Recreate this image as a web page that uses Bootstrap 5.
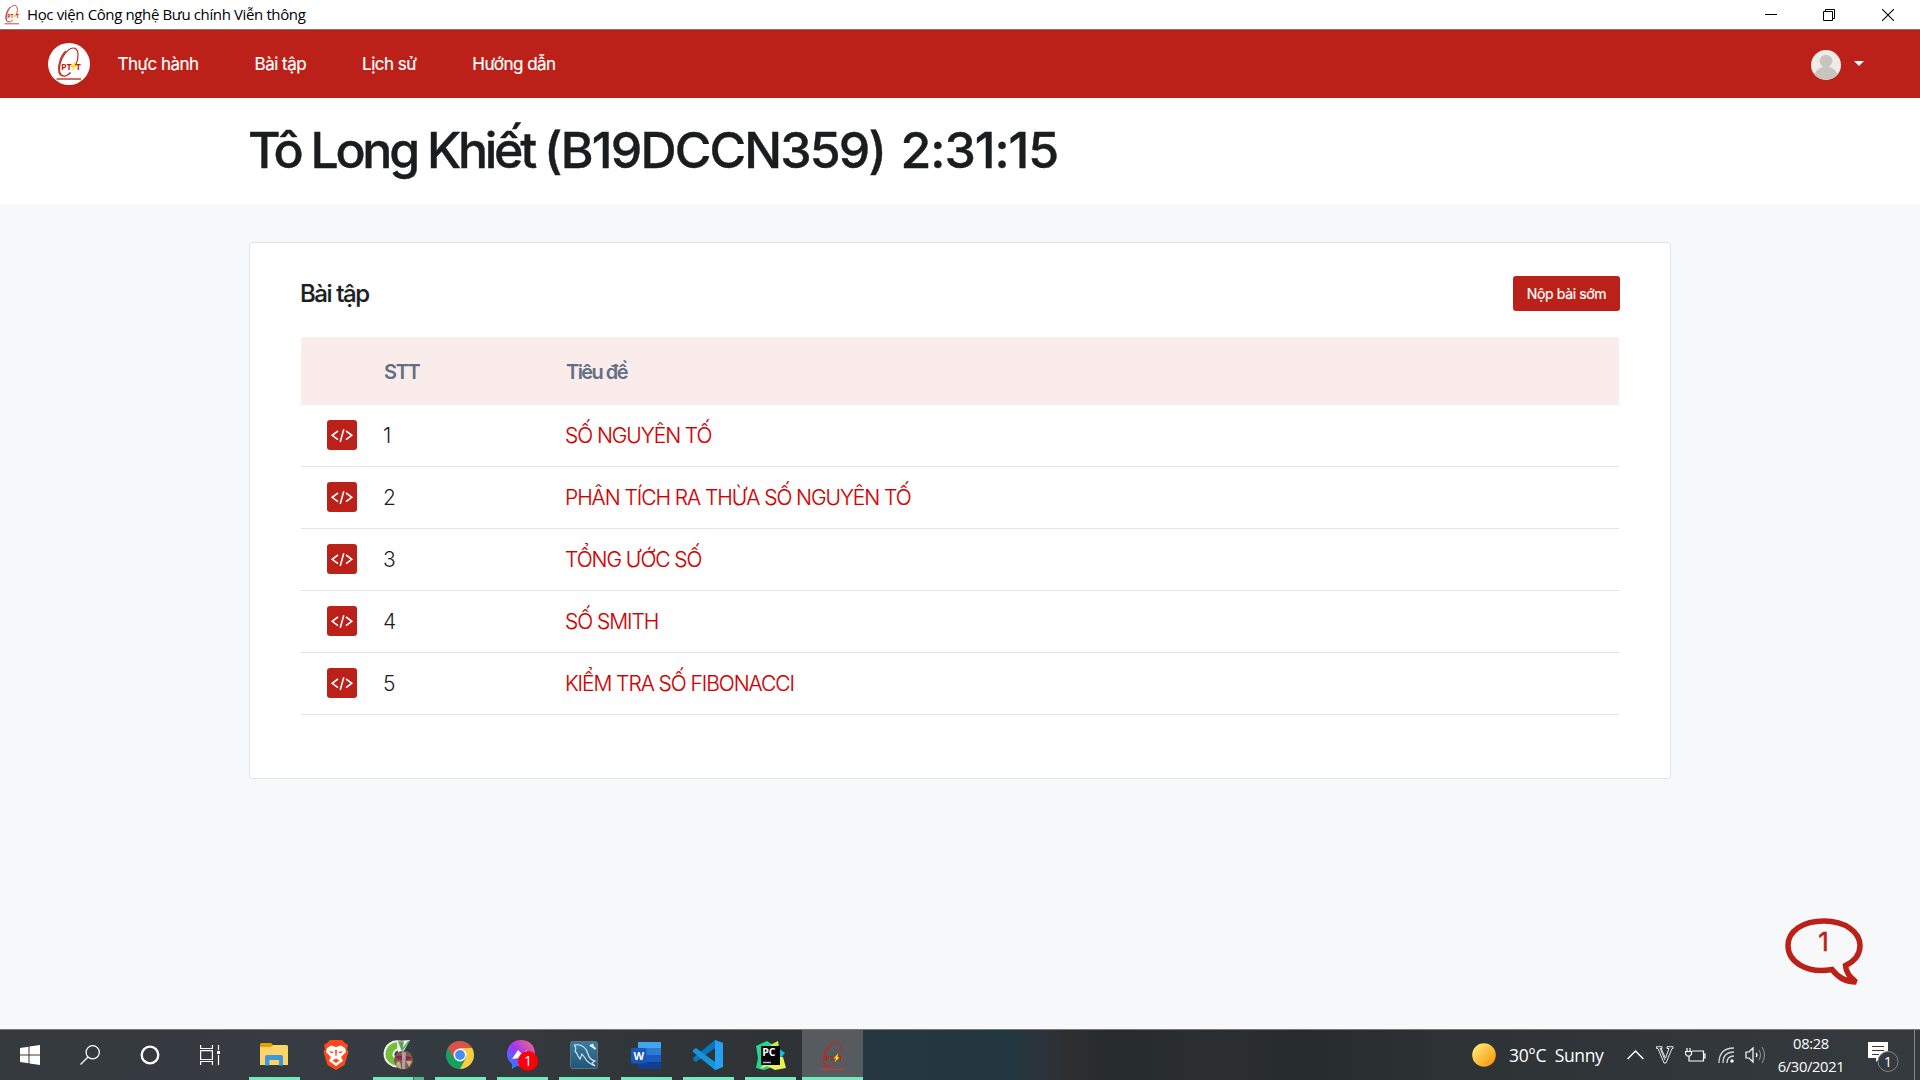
<!DOCTYPE html>
<html lang="vi">
<head>
<meta charset="utf-8">
<meta name="viewport" content="width=device-width, initial-scale=1">
<title>Học viện Công nghệ Bưu chính Viễn thông</title>
<link href="https://cdn.jsdelivr.net/npm/bootstrap@5.3.0/dist/css/bootstrap.min.css" rel="stylesheet">
<style>
:root{--ptit-red:#bb2119}
body{font-family:Inter,"Liberation Sans",sans-serif;background:#f6f8fa;color:#1b1f23;width:1920px;height:1080px;overflow:hidden}
svg{display:block;flex:none}
.titlebar{height:30px;background:#fff;border-bottom:1px solid #7d7671;color:#000;font:15px "Open Sans","Noto Sans",sans-serif;padding:0 3px 0 3px}
.titlebar .caption{letter-spacing:-.37px;margin:0 0 2px 6px}
.winctl{width:58.5px}
.topnav{height:68px;background:var(--ptit-red);padding:0 56px 0 48px}
.topnav .nav-link{color:#fff;font-size:17px;letter-spacing:-.52px;-webkit-text-stroke:.2px #fff;padding:0;margin-left:56px;line-height:24px}
.topnav .nav-link.first{margin-left:27.5px}
.caret{border:5px solid transparent;border-top-color:#fff;border-bottom:0;margin:0 0 1px 13px}
.banner{height:106px;background:#fff;padding:0 0 2px 248px}
.banner h1{font-size:50px;font-weight:500;line-height:60px;color:#1b1c1e;-webkit-text-stroke:.4px #1b1c1e}
.who{letter-spacing:-3.28px}
.code-id{letter-spacing:-1.85px}
.clock{letter-spacing:-1.05px;margin-left:15.5px}
.panel{width:1422px;height:537px;margin:38px 0 0 249px;border:1px solid #e1e4e8;border-radius:4px;background:#fff;padding:33px 50px 0}
.panel h2{font-size:24px;font-weight:500;letter-spacing:-1.4px;line-height:36px;-webkit-text-stroke:.2px #1b1f23}
.early{background:var(--ptit-red);color:#fff;border:0;border-radius:3px;width:107px;height:35px;padding:0;font-size:14px;font-weight:400;letter-spacing:-.35px;margin-bottom:1px;-webkit-text-stroke:.2px #fff}
.early:hover{background:#a31c15;color:#fff}
.tasks{width:1318px;margin:25px 0 0 1px;table-layout:fixed;border-collapse:separate;border-spacing:0}
.tasks th{height:68px;background:#f9eceb;color:#637083;font-size:20px;font-weight:600;letter-spacing:-1.3px;padding:1px 1px 0;vertical-align:middle}
.tasks th:nth-child(3){letter-spacing:-1.55px}
.tasks th:first-child{border-top-left-radius:4px}
.tasks th:last-child{border-top-right-radius:4px}
.tasks td{height:62px;border-bottom:1px solid #e1e4e8;font-size:21px;font-weight:300;padding:1px 0 0;vertical-align:middle}
.tasks td:first-child{padding:0 0 1px}
.tasks a{color:#cf0000;text-decoration:none;letter-spacing:-1.06px;-webkit-text-stroke:.15px #cf0000}
.codebtn{width:30px;height:30px;border-radius:3px;background:var(--ptit-red);margin-left:26px}
.bubble{position:absolute;left:1785px;top:917px;width:80px;height:68px}
.taskbar{position:absolute;left:0;right:0;bottom:0;height:51px;border-top:1px solid #77797b;background:linear-gradient(90deg,#343a3e 0,#373b42 310px,#343b40 430px,#2e3235 800px,#263741 863px,#22363f 1010px,#2c3239 1042px,#2d2e2f 1075px,#262b2b 1115px,#2b2f31 1220px,#262b2b 1300px,#2d3335 1450px,#343a3e 1920px);color:#fff;font-family:"Open Sans","Noto Sans",sans-serif}
.sysbtn{width:60px;height:50px}
.app{width:62px;height:50px;position:relative}
.run::after{content:"";position:absolute;left:6px;right:5px;bottom:0;height:3px;background:#74e9bb}
.stacked::after{background:linear-gradient(90deg,#74e9bb 40px,#416c60 40px,#416c60 41px,#54b592 41px)}
.now{width:61px;margin-left:1px;background:#555b5f}
.now::after{left:0;right:0}
.weather{font-size:17.5px;letter-spacing:-.33px;white-space:pre;width:118px;margin-left:13px}
.datetime{width:68px;font-size:14.7px;line-height:23px;letter-spacing:-.32px;white-space:nowrap}
.peek{width:1px;height:50px;background:#868a8c}
</style>
</head>
<body>
<svg width="0" height="0" class="position-absolute">
<defs>
<symbol id="ptit" viewBox="6 3 30 35">
<ellipse cx="20.700" cy="19" rx="7.600" ry="15" transform="rotate(25 20.700 19)" fill="none" stroke="#bf2a24" stroke-width="1.200" pathLength="100" stroke-dasharray="90 10" stroke-dashoffset="-12"/>
<path d="M18 8C14 11 9.500 20 11 29C11.500 31.500 13 33 15 32.500" fill="none" stroke="#bf2a24" stroke-width="1.300"/>
<text x="13" y="26.500" font-family="Open Sans,sans-serif" font-weight="700" font-size="8.800" fill="#bd241c">PT</text>
<text x="27.800" y="26.500" font-family="Open Sans,sans-serif" font-weight="700" font-size="8.800" fill="#bd241c">T</text>
<path d="M27.500 18L22.500 24H25L23.500 28L29 22.500H26.500Z" fill="#f8ea00"/>
<path d="M8.500 36H33" stroke="#c43b35" stroke-width="1.500"/>
</symbol>
<symbol id="code" viewBox="0 0 30 30">
<path d="M11 11L5.200 15.300L11 19.700M19 11L24.800 15.300L19 19.700M16.800 9.200L13.200 22" fill="none" stroke="#fff" stroke-width="1.600"/>
</symbol>
</defs>
</svg>

<header class="titlebar d-flex align-items-center">
<svg width="18" height="21"><use href="#ptit"/></svg>
<span class="caption">Học viện Công nghệ Bưu chính Viễn thông</span>
<div class="d-flex ms-auto">
<div class="winctl d-flex justify-content-center"><svg width="12" height="12"><path d="M0 5.500H12" stroke="#000"/></svg></div>
<div class="winctl d-flex justify-content-center"><svg width="12" height="12" fill="none" stroke="#000"><path d="M.5 2.500H9.500V11.500H.5ZM2.500 2.500V.5H11.500V9.500H9.500"/></svg></div>
<div class="winctl d-flex justify-content-center"><svg width="12" height="12"><path d="M0 0L12 12M12 0L0 12" stroke="#000" stroke-width="1.100"/></svg></div>
</div>
</header>

<nav class="topnav d-flex align-items-center">
<svg width="42" height="42" viewBox="0 0 42 42"><circle cx="21" cy="21" r="21" fill="#fff"/><use href="#ptit" x="6" y="3" width="30" height="35"/></svg>
<a class="nav-link first" href="#">Thực hành</a>
<a class="nav-link" href="#">Bài tập</a>
<a class="nav-link" href="#">Lịch sử</a>
<a class="nav-link" href="#">Hướng dẫn</a>
<div class="d-flex align-items-center ms-auto">
<svg width="30" height="31" viewBox="0 -1 30 31"><clipPath id="av"><circle cx="15" cy="15" r="15"/></clipPath><g clip-path="url(#av)"><path fill="#efebe7" d="M0 0H30V30H0Z"/><circle cx="15" cy="11" r="6.300" fill="#c8c4be"/><path d="M3 27C5 13 25 13 27 27V31H3Z" fill="#c8c4be"/></g></svg>
<span class="caret"></span>
</div>
</nav>

<section class="banner d-flex align-items-center"><h1 class="m-0 text-nowrap"><span class="who">Tô Long Khiết </span><span class="code-id">(B19DCCN359)</span><span class="clock">2:31:15</span></h1></section>

<main class="panel">
<div class="d-flex justify-content-between align-items-center"><h2 class="m-0">Bài tập</h2><button class="btn early">Nộp bài sớm</button></div>
<table class="tasks">
<colgroup><col style="width:82px"><col style="width:182px"><col></colgroup>
<thead><tr><th></th><th>STT</th><th>Tiêu đề</th></tr></thead>
<tbody>
<tr><td><div class="codebtn"><svg width="30" height="30"><use href="#code"/></svg></div></td><td>1</td><td><a href="#">SỐ NGUYÊN TỐ</a></td></tr>
<tr><td><div class="codebtn"><svg width="30" height="30"><use href="#code"/></svg></div></td><td>2</td><td><a href="#">PHÂN TÍCH RA THỪA SỐ NGUYÊN TỐ</a></td></tr>
<tr><td><div class="codebtn"><svg width="30" height="30"><use href="#code"/></svg></div></td><td>3</td><td><a href="#">TỔNG ƯỚC SỐ</a></td></tr>
<tr><td><div class="codebtn"><svg width="30" height="30"><use href="#code"/></svg></div></td><td>4</td><td><a href="#">SỐ SMITH</a></td></tr>
<tr><td><div class="codebtn"><svg width="30" height="30"><use href="#code"/></svg></div></td><td>5</td><td><a href="#">KIỂM TRA SỐ FIBONACCI</a></td></tr>
</tbody>
</table>
</main>

<div class="bubble"><svg width="80" height="68" viewBox="0 0 80 68"><path d="M47 52.500C22 57 3 45 3 28.500C3 14 18 4 39 4S75 15 75 28.500C75 37 70 44 60.500 48.500C61 56 65 60 71 65C60 65 52 59 47 52.500Z" fill="#f6f8fa" stroke="#bb2119" stroke-width="5.500" stroke-linejoin="miter" stroke-miterlimit="2"/><text x="38.500" y="34" text-anchor="middle" font-family="Inter,sans-serif" font-size="26" fill="#bb2119" stroke="#bb2119" stroke-width=".5">1</text></svg></div>

<footer class="taskbar d-flex align-items-center">
<div class="sysbtn d-flex align-items-center justify-content-center"><svg width="20" height="20" fill="#fff"><path d="M0 3L8.500 1.700V9.500H0ZM9.500 1.500L20 0V9.500H9.500ZM0 10.500H8.500V18.300L0 17ZM9.500 10.500H20V20L9.500 18.500Z"/></svg></div>
<div class="sysbtn d-flex align-items-center justify-content-center"><svg width="20" height="20" fill="none" stroke="#fff" stroke-width="1.300"><circle cx="12.700" cy="7.300" r="6.600"/><path d="M8 12L.5 19.500"/></svg></div>
<div class="sysbtn d-flex align-items-center justify-content-center"><svg width="20" height="20" fill="none" stroke="#fff" stroke-width="2.300"><circle cx="10" cy="10" r="8.300"/></svg></div>
<div class="sysbtn d-flex align-items-center justify-content-center"><svg width="20" height="20" fill="none" stroke="#fff" stroke-width="1.200"><path d="M.6 0V3.500H12.400V0M.6 5.600H12.400V14.500H.6ZM.6 20V16.500H12.400V20M18.500 0V5M18.500 10V20"/><path d="M17 6H20V9H17Z" fill="#fff" stroke="none"/></svg></div>
<div class="d-flex" style="margin-left:3px">
<div class="app run d-flex align-items-center justify-content-center"><svg width="28" height="24" viewBox="0 0 28 24"><path d="M0 1.500Q0 0 1.500 0H11L13 2H27V8H0Z" fill="#e3a005"/><path d="M0 4H11L13 2H26.500Q28 2 28 3.500V22H0Z" fill="#fcd468"/><path d="M5 22.500V14Q5 12 7 12H21Q23 12 23 14V22.500H19V17H9.500V22.500Z" fill="#3d98dc"/></svg></div>
<div class="app d-flex align-items-center justify-content-center"><svg width="26" height="32" viewBox="0 0 26 32"><path d="M7 1H19L22 4L25 6L24 10L25.500 13L21.500 26L13 31L4.500 26L.5 13L2 10L1 6L4 4Z" fill="#fb4a18"/><path d="M4 9L8 6.500L13 8L18 6.500L22 9L23 13L18 18L20 22L13 27L6 22L8 18L3 13Z" fill="#fff"/><path d="M6 12L11 13L8.500 14.500ZM20 12L15 13L17.500 14.500ZM9.500 21.500L13 19.500L16.500 21.500L13 24ZM12 11H14L13.500 17H12.500Z" fill="#fb4a18"/></svg></div>
<div class="app run stacked d-flex align-items-center justify-content-center"><svg width="32" height="32" viewBox="0 0 32 32"><path d="M19 3A12.500 12.500 0 1 0 18 27L15 20Q9 17 13 12L16 10Z" fill="#76bf3b" stroke="#eef5ec" stroke-width="2"/><path d="M15 2L28 1L20 15H16Z" fill="#f5f5ef"/><path d="M17 3L20 11L21 3ZM27 2L20 11" fill="#f15232" stroke="#4fac67" stroke-width="1.500"/><circle cx="21.500" cy="21" r="9.500" fill="#7b5955"/><path d="M12 18Q21 15 31 19L22 22Z" fill="#8e2240"/><path d="M20 12L24 14L23 30H20Z" fill="#b09f9e"/><path d="M15 23Q19 20 19 30Q15 29 14 25ZM24 22H30L27 28Z" fill="#c8ac80"/></svg></div>
<div class="app run d-flex align-items-center justify-content-center"><svg width="28" height="28" viewBox="0 0 28 28"><circle cx="14" cy="14" r="14" fill="#17a05e"/><path d="M1.900 7A14 14 0 0 1 26.100 7H14L8 17Z" fill="#de5145"/><path d="M26.100 7A14 14 0 0 1 14 28L20 17L14 7Z" fill="#ffcd42"/><circle cx="14" cy="14" r="6.400" fill="#fff"/><circle cx="14" cy="14" r="5" fill="#4b8bf4"/></svg></div>
<div class="app run d-flex align-items-center justify-content-center"><svg width="32" height="32" viewBox="0 0 32 32"><linearGradient id="ms" x1="0" y1="1" x2="1" y2="0"><stop stop-color="#0694ff"/><stop offset=".5" stop-color="#a334fa"/><stop offset="1" stop-color="#ff716a"/></linearGradient><path d="M15 1C7 1 1 7 1 15C1 20 3 22 6 25V30L11 27C21 30 29 24 29 15S23 1 15 1Z" fill="url(#ms)"/><path d="M6 20L12 11L16 15L21 11L19 19H13Z" fill="#fff"/><circle cx="22" cy="22" r="10" fill="#fb0007"/><text x="22" y="26.500" text-anchor="middle" fill="#fff" font-size="14" font-family="Open Sans">1</text></svg></div>
<div class="app run d-flex align-items-center justify-content-center"><svg width="28" height="28" viewBox="0 0 28 28"><linearGradient id="sq" x2="0" y2="1"><stop stop-color="#397da4"/><stop offset="1" stop-color="#205575"/></linearGradient><rect x=".5" y=".5" width="27" height="27" rx="2" fill="url(#sq)" stroke="#62717c"/><path d="M4 4C11 3 16 6 18 13C19 17 21 19 25 20L22 22L25 25C20 23 17 21 15 17L12 13L10 18L8 15C7 12 6 11 5 10C7 7 5 5 4 4" fill="none" stroke="#dce9ef" stroke-width="1.100"/><path d="M21 4L25.500 8M20 4L22 5.500L23 3" stroke="#fff" stroke-width="1.700" fill="none"/></svg></div>
<div class="app run d-flex align-items-center justify-content-center"><svg width="30" height="28" viewBox="0 0 30 28"><path d="M7 1H30V8H7Z" fill="#42a5ee"/><path d="M7 7H30V14H7Z" fill="#2b7cd3"/><path d="M7 14H30V21H7Z" fill="#185abd"/><path d="M7 21H30V28H7Z" fill="#123f91"/><rect x="0" y="7" width="15.500" height="15.500" rx="1.500" fill="#1856b7"/><text x="7.700" y="18.500" text-anchor="middle" fill="#fff" font-weight="700" font-size="11" font-family="Open Sans">W</text></svg></div>
<div class="app run d-flex align-items-center justify-content-center"><svg width="30" height="30" viewBox="0 0 30 30"><path d="M22 0L30 3V27L22 30V8L3 22L0 20V18Z" fill="#0677bd"/><path d="M0 10L3 8L22 22V30L0 12Z" fill="#1694dc"/><path d="M22 0L30 3V27L22 30Z" fill="#26a0f0"/></svg></div>
<div class="app run d-flex align-items-center justify-content-center"><svg width="31" height="31" viewBox="0 0 31 31"><path d="M1 6L12 1L18 5L23 1L24 9L15 28L9 30L1 28L3 18Z" fill="#22d88f"/><path d="M15 5L23 1L24 10Z" fill="#c0f13e"/><path d="M23 8L30 13L25 19Z" fill="#0abfec"/><path d="M28 17L31 28L20 30L12 26L5 29L14 17Z" fill="#e9f54c"/><path d="M6 6H25V25H6Z" fill="#050505"/><text x="7.200" y="15.500" fill="#fff" font-weight="700" font-size="10.500" font-family="Open Sans">PC</text><path d="M8 22.500H16" stroke="#bbb" stroke-width="1.500"/></svg></div>
<div class="app run now d-flex align-items-center justify-content-center"><svg width="27" height="31"><use href="#ptit"/></svg></div>
</div>
<div class="d-flex align-items-center ms-auto">
<svg width="24" height="24"><linearGradient id="sun" x2="1" y2="1"><stop offset=".1" stop-color="#ffe878"/><stop offset=".9" stop-color="#ff9706"/></linearGradient><circle cx="12" cy="12" r="11.800" fill="url(#sun)"/></svg>
<span class="weather">30°C  Sunny</span>
<svg width="17" height="10" fill="none" stroke="#fff" stroke-width="1.400"><path d="M.6 9L8.500 1L16.400 9"/></svg>
<svg width="18" height="18" style="margin-left:12px" fill="none" stroke="#e8e8e8"><path d="M.5 .7H6V2.500H5L9.500 12L13 2.500H11V.7H17V2.500H16L10 17H8L2 2.500H.5ZM4 2L9 14"/></svg>
<svg width="21" height="15" style="margin-left:11px" fill="none" stroke="#fff" stroke-width="1.200"><path d="M7 3H18.500V13H4V9M18.500 6H20V10H18.500M2 0V3M5 0V3M.5 3.500H6.500V6L5 8H2L.5 6ZM4 8V12"/></svg>
<svg width="17" height="17" style="margin-left:12px" fill="none" stroke="#d5d7d8" stroke-width="1.300"><path d="M1 16Q1 1 16 1M5 16Q5 5 16 5M9 16Q9 9 16 9"/><circle cx="14" cy="14" r="1.700" fill="#fff" stroke="none"/></svg>
<svg width="21" height="18" style="margin-left:10px" fill="none" stroke="#fff" stroke-width="1.200"><path d="M1 6H4L8 2V16L4 12H1ZM11 7Q13 9 11 11"/><path d="M14 4Q17 9 14 14M17 1Q22 9 17 17" stroke="#858a8d"/></svg>
<div class="datetime text-center" style="margin-left:11px">08:28<br>6/30/2021</div>
<svg width="32" height="32" style="margin:4px 14px 0 23px"><path d="M0 1H20V17H12L8 21V17H0Z" fill="#fff"/><path d="M4 5.500H16M4 9.500H16M4 13.500H11" stroke="#343a3e"/><circle cx="20" cy="20.500" r="10" fill="#343a3e" stroke="#818486"/><text x="20" y="25.500" text-anchor="middle" font-size="14" fill="#fff" font-family="Open Sans">1</text></svg>
<span class="peek" style="margin-right:5px"></span>
</div>
</footer>
<script src="https://cdn.jsdelivr.net/npm/bootstrap@5.3.0/dist/js/bootstrap.bundle.min.js"></script>
</body>
</html>
